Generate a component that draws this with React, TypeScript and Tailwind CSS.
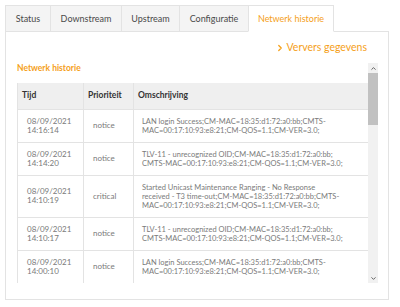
import { ChevronRight, ChevronUp, ChevronDown } from "lucide-react";

const tabs = [
  { name: "Status", w: "w-[46px]" },
  { name: "Downstream", w: "w-[72px]" },
  { name: "Upstream", w: "w-[59px]" },
  { name: "Configuratie", w: "w-[70px]" },
  { name: "Netwerk historie", w: "w-[86px]", active: true },
];

const lanLines = [
  "LAN login Success;CM-MAC=18:35:d1:72:a0:bb;CMTS-",
  "MAC=00:17:10:93:e8:21;CM-QOS=1.1;CM-VER=3.0;",
];
const tlvLines = [
  "TLV-11 - unrecognized OID;CM-MAC=18:35:d1:72:a0:bb;",
  "CMTS-MAC=00:17:10:93:e8:21;CM-QOS=1.1;CM-VER=3.0;",
];

const events = [
  { date: "08/09/2021", time: "14:16:14", prio: "notice", lines: lanLines },
  { date: "08/09/2021", time: "14:14:20", prio: "notice", lines: tlvLines },
  {
    date: "08/09/2021",
    time: "14:10:19",
    prio: "critical",
    lines: [
      "Started Unicast Maintenance Ranging - No Response",
      "received - T3 time-out;CM-MAC=18:35:d1:72:a0:bb;CMTS-",
      "MAC=00:17:10:93:e8:21;CM-QOS=1.1;CM-VER=3.0;",
    ],
  },
  { date: "08/09/2021", time: "14:10:17", prio: "notice", lines: tlvLines },
  { date: "08/09/2021", time: "14:00:10", prio: "notice", lines: lanLines },
];

export default function App() {
  return (
    <div className="w-[400px] h-[307px] bg-white pt-[5px] pl-[5px] font-['Lato',sans-serif]">
      {/* Tabs */}
      <div className="flex h-[27px] relative z-10">
        {tabs.map((t) => (
          <div
            key={t.name}
            className={`${t.w} -mr-px flex items-center justify-center border border-[#e3e3e3] text-[9px] ${
              t.active
                ? "bg-white border-b-white text-[#f5a01a]"
                : "bg-[#f4f4f4] text-[#4a4a4a]"
            }`}
          >
            {t.name}
          </div>
        ))}
      </div>

      {/* Panel */}
      <div className="-mt-px w-[384px] h-[269px] border border-[#e3e3e3] pt-[8px]">
        <div className="flex justify-end pr-[21px] h-[15px] items-center text-[10.5px] text-[#f5a01a]">
          <ChevronRight className="h-[10px] w-[10px] mr-[2px]" strokeWidth={3} />
          Ververs gegevens
        </div>

        <div className="mt-[8px] ml-[11px] flex h-[220px] w-[361px]">
          <div className="flex-1 overflow-hidden">
            <div className="h-[20px] pt-[1px] text-[8.5px] font-bold leading-[9px] text-[#f5a01a]">
              Netwerk historie
            </div>
            <table className="w-full border-collapse text-[8px] leading-[9px]">
              <thead>
                <tr className="bg-[#efefef] h-[26px] text-left text-[8.5px] font-bold text-[#333]">
                  <th className="w-[66px] pl-[4px] border-l border-[#e3e3e3]">Tijd</th>
                  <th className="w-[50px] pl-[4px] border-l border-[#e3e3e3]">Prioriteit</th>
                  <th className="pl-[4px] border-l border-[#e3e3e3]">Omschrijving</th>
                </tr>
              </thead>
              <tbody className="text-[#7a7a7a]">
                {events.map((e, i) => (
                  <tr key={i} className="border-t border-[#e3e3e3]">
                    <td className="pl-[9px] py-[7px] align-middle border-l border-[#e3e3e3]">
                      <div>{e.date}</div>
                      <div>{e.time}</div>
                    </td>
                    <td className="pl-[9px] align-middle border-l border-[#e3e3e3]">{e.prio}</td>
                    <td className="pl-[8px] py-[7px] align-middle border-l border-[#e3e3e3] whitespace-nowrap text-[7.5px]">
                      {e.lines.map((l) => (
                        <div key={l}>{l}</div>
                      ))}
                    </td>
                  </tr>
                ))}
              </tbody>
            </table>
          </div>

          {/* Scrollbar */}
          <div className="w-[10px] flex flex-col bg-[#f1f1f1]">
            <div className="h-[10px] flex items-center justify-center text-[#505050]">
              <ChevronUp className="h-[7px] w-[7px]" strokeWidth={3} />
            </div>
            <div className="flex-1">
              <div className="h-[52px] bg-[#c1c1c1]" />
            </div>
            <div className="h-[10px] flex items-center justify-center text-[#505050]">
              <ChevronDown className="h-[7px] w-[7px]" strokeWidth={3} />
            </div>
          </div>
        </div>
      </div>
    </div>
  );
}
